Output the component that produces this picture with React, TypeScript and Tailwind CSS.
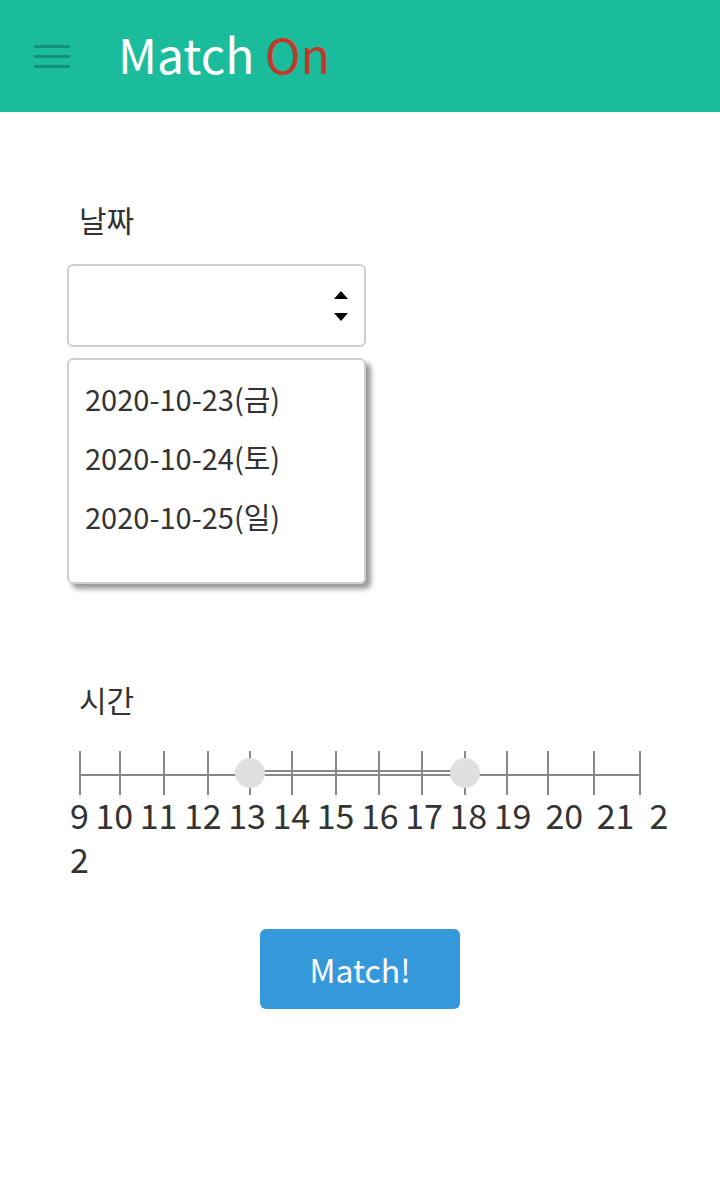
import React from "react";

const dates = ["2020-10-23(금)", "2020-10-24(토)", "2020-10-25(일)"];

// tick x positions inside the slider drawing (offset from x=70)
const ticks = [10, 50, 94, 138, 180, 222, 266, 309, 352, 395, 437, 478, 524, 570];

const hours = [
  { t: "9", ml: "ml-0" },
  { t: "10", ml: "ml-[6.5px]" },
  { t: "11", ml: "ml-[6.5px]" },
  { t: "12", ml: "ml-[6.5px]" },
  { t: "13", ml: "ml-[6.5px]" },
  { t: "14", ml: "ml-[6.5px]" },
  { t: "15", ml: "ml-[6.5px]" },
  { t: "16", ml: "ml-[6.5px]" },
  { t: "17", ml: "ml-[6.5px]" },
  { t: "18", ml: "ml-[6.5px]" },
  { t: "19", ml: "ml-[6.5px]" },
  { t: "20", ml: "ml-[14px]" },
  { t: "21", ml: "ml-[13.5px]" },
  { t: "2", ml: "ml-[15px]" },
];

function TimeSlider() {
  return (
    <svg width="590" height="50" viewBox="0 0 590 50" className="block">
      <line x1="10" y1="26" x2="570" y2="26" stroke="#888" strokeWidth="2" />
      {ticks.map((x) => (
        <line key={x} x1={x} y1="2" x2={x} y2="46" stroke="#888" strokeWidth="2" />
      ))}
      <rect x="180" y="21" width="215" height="7" fill="#fff" />
      <line x1="180" y1="22" x2="395" y2="22" stroke="#888" strokeWidth="2" />
      <line x1="180" y1="26" x2="395" y2="26" stroke="#888" strokeWidth="2" />
      {[222, 266, 309, 352].map((x) => (
        <line key={x} x1={x} y1="2" x2={x} y2="46" stroke="#888" strokeWidth="2" />
      ))}
      <circle cx="180" cy="24" r="15" fill="#e0e0e0" />
      <circle cx="395" cy="24" r="15" fill="#e0e0e0" />
    </svg>
  );
}

export default function App() {
  return (
    <div
      className="min-h-[1200px] w-[720px] bg-white text-[#333]"
      style={{ fontFamily: '"Noto Sans CJK KR", "Noto Sans", sans-serif' }}
    >
      {/* Header */}
      <header className="flex h-[112px] items-center bg-[#1abc9c]">
        <div className="ml-[34px] flex w-[36px] flex-col gap-[7px]">
          <span className="block h-[3px] bg-[#148f7d]" />
          <span className="block h-[3px] bg-[#148f7d]" />
          <span className="block h-[3px] bg-[#148f7d]" />
        </div>
        <h1 className="mb-[6px] ml-[48px] text-[48px] leading-none text-white">
          Match <span className="text-[#c0392b]">On</span>
        </h1>
      </header>

      <main className="px-[67px] pt-[92px]">
        {/* Date */}
        <label className="ml-[12px] block text-[30px] leading-none">날짜</label>
        <div className="mt-[30px] flex h-[83px] w-[299px] items-center justify-end rounded-[6px] border-2 border-[#cfcfcf] pr-[16px]">
          <div className="flex flex-col items-center gap-[14px]">
            <span className="block h-0 w-0 border-x-[7px] border-b-[8px] border-x-transparent border-b-black" />
            <span className="block h-0 w-0 border-x-[7px] border-t-[8px] border-x-transparent border-t-black" />
          </div>
        </div>
        <ul className="mt-[11px] h-[226px] w-[299px] rounded-[6px] border-2 border-[#cfcfcf] pl-[16px] pt-[20px] shadow-[5px_5px_5px_rgba(0,0,0,0.4)]">
          {dates.map((d) => (
            <li key={d} className="h-[59px] text-[29px] leading-[36px]">
              {d}
            </li>
          ))}
        </ul>

        {/* Time */}
        <label className="ml-[12px] mt-[100px] block text-[30px] leading-none">시간</label>
        <div className="ml-[3px] mt-[35px]">
          <TimeSlider />
        </div>
        <div className="ml-[3px] -mt-[6px] text-[34px] leading-[44px]">
          <div className="flex">
            {hours.map((h) => (
              <span key={h.t + h.ml} className={h.ml}>
                {h.t}
              </span>
            ))}
          </div>
          <div>2</div>
        </div>

        {/* Button */}
        <div className="mt-[48px] flex justify-center">
          <button className="h-[80px] w-[200px] rounded-[6px] bg-[#3498db] text-[32px] text-white">
            Match!
          </button>
        </div>
      </main>
    </div>
  );
}
